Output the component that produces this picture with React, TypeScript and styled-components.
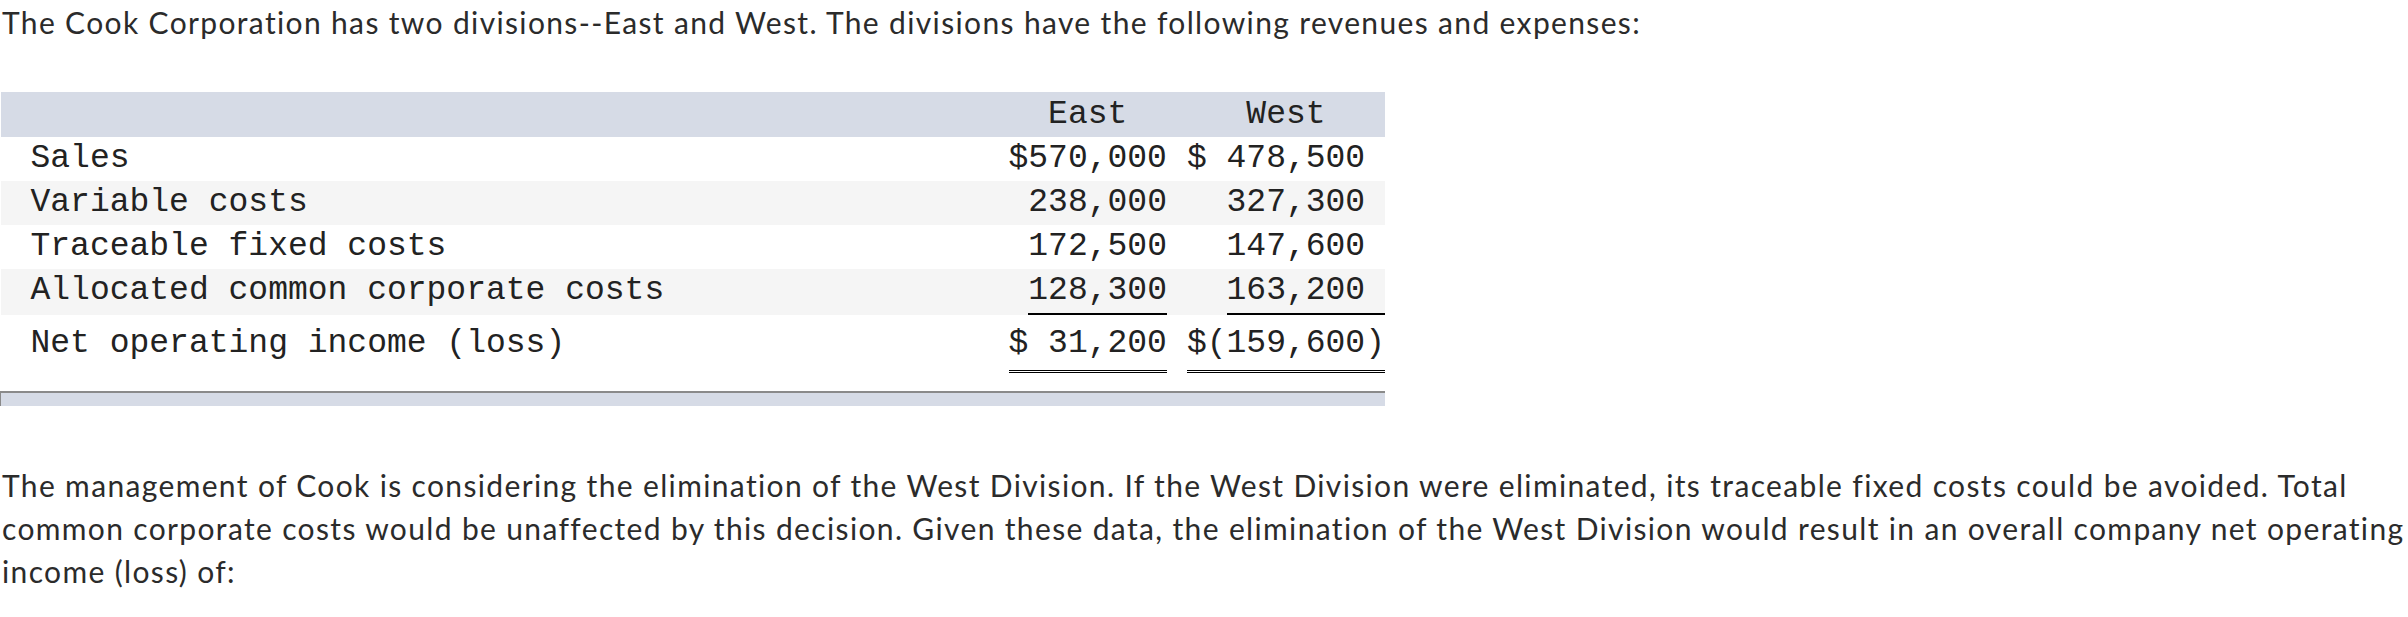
import { createGlobalStyle } from "styled-components";
import styled from "styled-components";

const GlobalStyle = createGlobalStyle`
  html, body {
    margin: 0;
    padding: 0;
    background: #fff;
  }
`;

const Page = styled.div`
  padding: 0 0 0 2px;
  color: #2b2b2b;
  font-family: Lato, "Noto Sans", sans-serif;
  font-size: 30px;
  line-height: 43px;
  letter-spacing: 1.35px;
`;

const Prompt = styled.p<{ $top: number; $bottom: number }>`
  margin: ${(p) => p.$top}px 0 ${(p) => p.$bottom}px;
`;

const DataTable = styled.table`
  margin-left: -2px;
  border-collapse: collapse;
  font-family: "Liberation Mono", "Courier New", monospace;
  font-size: 33px;
  letter-spacing: 0;
  color: #222;
`;

const HeadRow = styled.tr`
  background: #d6dbe6;
  height: 45px;
`;

const HeadCell = styled.th<{ $pad?: number }>`
  font-weight: normal;
  text-align: center;
  padding: 0 ${(p) => p.$pad ?? 0}px 0 0;
  line-height: 45px;
`;

const BodyRow = styled.tr<{ $striped?: boolean }>`
  background: ${(p) => (p.$striped ? "#f5f5f5" : "#fff")};
`;

const Label = styled.td<{ $total?: boolean }>`
  padding: ${(p) => (p.$total ? "7px 0 25px 30px" : "0 0 0 30px")};
  width: 978px;
  line-height: 44px;
  white-space: pre;
  vertical-align: top;
`;

const Amount = styled.td<{ $pad?: number; $total?: boolean }>`
  padding: ${(p) => (p.$total ? "7px" : "0")} ${(p) => p.$pad ?? 0}px
    ${(p) => (p.$total ? "18px" : "0")} 0;
  text-align: right;
  white-space: pre;
  vertical-align: top;
`;

const Figure = styled.span<{ $rule?: "single" }>`
  display: inline-block;
  line-height: 44px;
  border-bottom: ${(p) => (p.$rule === "single" ? "2px solid #000" : "none")};
`;

const Total = styled.span`
  display: inline-block;
  line-height: 44px;
  padding-bottom: 4px;
  border-bottom: 3px double #000;
`;

const FootRow = styled.tr`
  background: #d6dbe6;
  height: 14px;

  td {
    padding: 0;
    border-top: 2px solid #8a8a8a;
  }

  td:first-child {
    border-left: 1px solid #8a8a8a;
  }
`;

type Line = { label: string; east: string; west: string; rule?: "single" };

const lines: Line[] = [
  { label: "Sales", east: "$570,000", west: "$ 478,500 " },
  { label: "Variable costs", east: "238,000", west: "327,300 " },
  { label: "Traceable fixed costs", east: "172,500", west: "147,600 " },
  {
    label: "Allocated common corporate costs",
    east: "128,300",
    west: "163,200 ",
    rule: "single",
  },
];

export default function App() {
  return (
    <>
      <GlobalStyle />
      <Page>
        <Prompt $top={1} $bottom={48}>
          The Cook Corporation has two divisions--East and West. The divisions
          have the following revenues and expenses:
        </Prompt>
        <DataTable>
          <thead>
            <HeadRow>
              <HeadCell />
              <HeadCell $pad={20}>East</HeadCell>
              <HeadCell>West</HeadCell>
            </HeadRow>
          </thead>
          <tbody>
            {lines.map((l, i) => (
              <BodyRow key={l.label} $striped={i % 2 === 1}>
                <Label>{l.label}</Label>
                <Amount $pad={20}>
                  <Figure $rule={l.rule}>{l.east}</Figure>
                </Amount>
                <Amount>
                  <Figure $rule={l.rule}>{l.west}</Figure>
                </Amount>
              </BodyRow>
            ))}
            <BodyRow>
              <Label $total>Net operating income (loss)</Label>
              <Amount $pad={20} $total>
                <Total>$ 31,200</Total>
              </Amount>
              <Amount $total>
                <Total>$(159,600)</Total>
              </Amount>
            </BodyRow>
            <FootRow>
              <td />
              <td />
              <td />
            </FootRow>
          </tbody>
        </DataTable>
        <Prompt $top={58} $bottom={0}>
          The management of Cook is considering the elimination of the West
          Division. If the West Division were eliminated, its traceable fixed
          costs could be avoided. Total common corporate costs would be
          unaffected by this decision. Given these data, the elimination of the
          West Division would result in an overall company net operating income
          (loss) of:
        </Prompt>
      </Page>
    </>
  );
}
